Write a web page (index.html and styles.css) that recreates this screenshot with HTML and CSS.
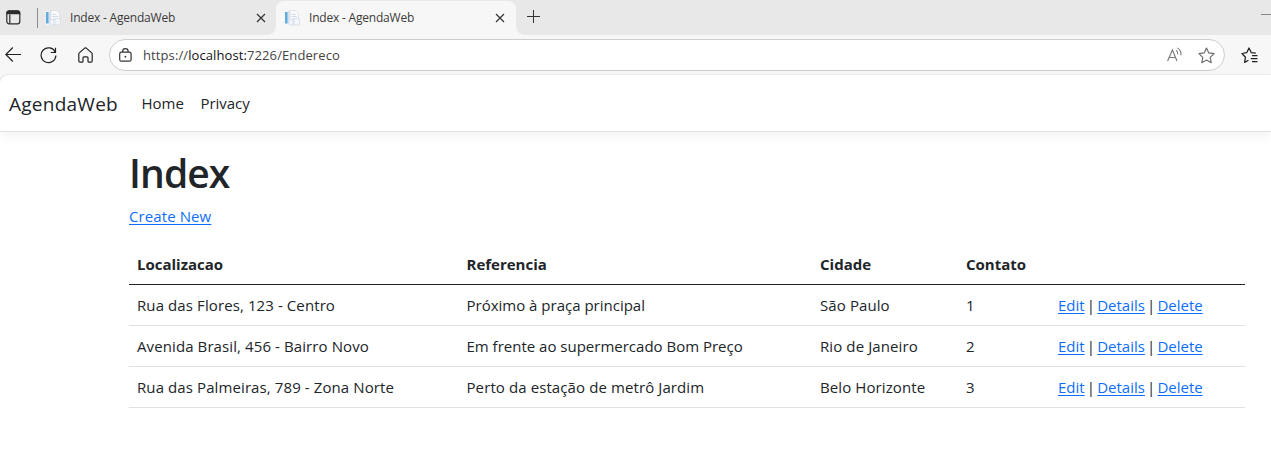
FILE: index.html
```html
<!DOCTYPE html>
<html lang="pt-BR">
<head>
<meta charset="utf-8">
<title>Index - AgendaWeb</title>
<link rel="stylesheet" href="styles.css">
</head>
<body>
<svg class="defs" width="0" height="0">
  <symbol id="favicon" viewBox="0 0 16 16">
    <path d="M.6 1h4v14h-4z" fill="#f6f8fb"/>
    <path d="M1 2h2.600v11.500H1z" fill="#62a9dc"/>
    <path d="M4 .8h6.500v13.200H4z" fill="#dde2ea"/>
    <path d="M6 .6h6l2.500 2.600V10H6z" fill="#f8fafc" stroke="#d3d9e3" stroke-width=".6"/>
    <path d="M7.500 4.500h4M7.500 6.500h5.500" stroke="#c8d0dd" stroke-width=".8"/>
    <path d="M5 9.500h5v5.500H5zM9 8.500h6.500v6.500H9z" fill="#f2f5fa" stroke="#cfd6e2" stroke-width=".6"/>
  </symbol>
  <symbol id="close" viewBox="0 0 10 10"><path d="M1 1l8 8M9 1L1 9" stroke="#333" stroke-width="1.200"/></symbol>
</svg>
<header class="browser">
  <div class="tabstrip">
    <svg class="workspace" width="15" height="15" viewBox="0 0 15 15" fill="none" stroke="#2b2b2b" stroke-width="1.200"><rect x=".8" y=".8" width="13" height="13" rx="2.300"/><path d="M1 2.900Q1 1 3 1h8.600q2 0 2 1.900V3.700H1z" fill="#2b2b2b"/><path d="M3.800 4.500v9"/></svg>
    <span class="divider"></span>
    <div class="tab"><svg class="fav"><use href="#favicon"/></svg><span class="tab-title">Index - AgendaWeb</span><svg class="close"><use href="#close"/></svg></div>
    <div class="tab active"><svg class="fav"><use href="#favicon"/></svg><span class="tab-title">Index - AgendaWeb</span><svg class="close"><use href="#close"/></svg></div>
    <svg class="plus" width="14" height="14" viewBox="0 0 14 14"><path d="M6.500 0v13M0 6.500h13" stroke="#333" stroke-width="1"/></svg>
    <span class="minimize"></span>
  </div>
  <div class="toolbar">
    <svg class="back" width="17" height="16" viewBox="0 0 17 16" fill="none" stroke="#222" stroke-width="1.200"><path d="M16 7.500H.8M7.800.5l-7 7 7 7"/></svg>
    <svg class="reload" width="17" height="17" viewBox="0 0 17 17" fill="none" stroke="#222" stroke-width="1.200"><path d="M15.300 5.300A7.400 7.400 0 1 0 15.900 8.500M15.500 .8v4.700h-4.700"/></svg>
    <svg class="home" width="15" height="16" viewBox="0 0 15 16" fill="none" stroke="#222" stroke-width="1.200" stroke-linejoin="round"><path d="M.8 7Q.8 6.300 1.300 5.900L6.700 1.100q.8-.6 1.600 0l5.400 4.800q.5.400.5 1.100v7q0 1.200-1.200 1.200h-2q-1 0-1-1V10.800q0-.9-.9-.9H5.900q-.9 0-.9.900v3.400q0 1-1 1H2Q.8 15.200.8 14z"/></svg>
    <div class="address">
      <svg class="lock" width="13" height="14" viewBox="0 0 13 14" fill="none" stroke="#333" stroke-width="1.200"><rect x=".7" y="4.200" width="11.400" height="9" rx="1.800"/><path d="M3.700 4V3.300a2.700 2.700 0 0 1 5.400 0V4"/><circle cx="6.400" cy="8.700" r=".9" fill="#333" stroke="none"/></svg>
      <span class="url"><span class="scheme">https://</span><span class="host">localhost:</span><span class="scheme">7226/Endereco</span></span>
      <svg class="read" width="16" height="16" viewBox="0 0 16 16" fill="none" stroke="#777" stroke-width="1.100"><path d="M.6 14L5.400 3l4.600 11M2.200 10.500h6.400"/><path d="M9 3.200q1.900 1.600 1.800 4M10.400.9q3.900 2.400 3.600 7.300" /></svg>
      <svg class="star" width="17" height="17" viewBox="0 0 17 17" fill="none" stroke="#6d6d6d" stroke-width="1.150" stroke-linejoin="round"><path d="M8.500 1l2.300 4.900 5.300.7-3.900 3.700 1 5.400-4.700-2.600-4.700 2.600 1-5.400L.9 6.600l5.300-.7z"/></svg>
    </div>
    <svg class="favorites" width="17" height="17" viewBox="0 0 17 17" fill="none" stroke="#222" stroke-width="1.250" stroke-linejoin="round"><path d="M14.800 6.200l-4.500-.5L8 1 5.700 5.700.9 6.500l3.600 3.700-.9 5.200 3.900-2.200"/><path d="M11 8.500h5.500M9.700 11.500h6.800M11 14.500h5.500"/></svg>
  </div>
</header>
<div class="page">
  <nav class="navbar">
    <a class="brand">AgendaWeb</a>
    <a class="nav-home">Home</a>
    <a class="nav-privacy">Privacy</a>
  </nav>
  <main class="container">
    <h1>Index</h1>
    <p><a class="link create">Create New</a></p>
    <table class="table">
      <colgroup><col class="c1"><col class="c2"><col class="c3"><col class="c4"><col class="c5"></colgroup>
      <thead><tr><th>Localizacao</th><th>Referencia</th><th>Cidade</th><th>Contato</th><th></th></tr></thead>
      <tbody>
        <tr><td class="place">Rua das Flores, 123 - Centro</td><td>Próximo à praça principal</td><td class="city">São Paulo</td><td>1</td><td class="actions"><a class="link">Edit</a> | <a class="link">Details</a> | <a class="link">Delete</a></td></tr>
        <tr><td class="place">Avenida Brasil, 456 - Bairro Novo</td><td>Em frente ao supermercado Bom Preço</td><td class="city">Rio de Janeiro</td><td>2</td><td class="actions"><a class="link">Edit</a> | <a class="link">Details</a> | <a class="link">Delete</a></td></tr>
        <tr><td class="place">Rua das Palmeiras, 789 - Zona Norte</td><td class="city">Perto da estação de metrô Jardim</td><td class="city">Belo Horizonte</td><td>3</td><td class="actions"><a class="link">Edit</a> | <a class="link">Details</a> | <a class="link">Delete</a></td></tr>
      </tbody>
    </table>
  </main>
</div>
</body>
</html>
```
FILE: styles.css
```css
* { box-sizing: border-box; }
body { margin: 0; height: 475px; overflow: hidden; background: #f7f7f7; color: #212529; font: 15px/24px "Open Sans", "Noto Sans", sans-serif; }
svg { display: block; flex: none; }
.defs { position: absolute; }
.tabstrip { display: flex; align-items: center; height: 35px; background: #e8e8e8; }
.workspace { margin: 0 0 1px 6px; }
.divider { width: 1px; height: 20px; margin: 1px 0 0 16px; background: #8a8a8a; }
.tab { display: flex; align-items: center; width: 238px; height: 35px; padding: 0 10px 0 7px; font-size: 12px; color: #3b3b3b; }
.tab.active { position: relative; width: 240px; height: 34px; margin-top: 1px; padding: 0 11px 1px 8px; background: #f7f7f7; border-radius: 8px 8px 0 0; }
.tab.active::before, .tab.active::after { content: ""; position: absolute; bottom: 0; width: 8px; height: 8px; }
.tab.active::before { left: -8px; background: radial-gradient(circle at 0 0, transparent 7.5px, #f7f7f7 8px); }
.tab.active::after { right: -8px; background: radial-gradient(circle at 100% 0, transparent 7.5px, #f7f7f7 8px); }
.fav { width: 16px; height: 16px; margin-right: 9px; }
.tab-title { flex: 1; white-space: nowrap; letter-spacing: -.2px; }
.close { width: 10px; height: 10px; }
.plus { margin: 0 0 1px 11px; }
.minimize { width: 10px; height: 1px; margin: 0 0 6px auto; background: #888; }
.toolbar { display: flex; align-items: center; height: 40px; }
.back { margin-left: 5px; }
.reload { margin-left: 18px; }
.home { margin-left: 21px; }
.address { display: flex; align-items: center; width: 1116px; height: 32px; margin-left: 16px; padding: 0 9px 0 9px; background: #fff; border: 1px solid #cdcdcd; border-radius: 16px; }
.url { flex: 1; margin-left: 11px; font-size: 13px; letter-spacing: .1px; }
.scheme { color: #444; }
.host { color: #111; }
.star { margin-left: 15px; }
.favorites { margin-left: 16px; }
.page { height: 400px; background: #fff; border-radius: 8px 0 0; box-shadow: 0 0 2px rgba(0,0,0,.2); overflow: hidden; }
.navbar { display: flex; align-items: center; height: 57px; padding-left: 9px; border-bottom: 1px solid #dee2e6; box-shadow: 0 4px 12px rgba(0,0,0,.05); }
.brand { width: 132.5px; padding-top: 1px; font-size: 19px; letter-spacing: .25px; }
.nav-home { width: 59px; }
.nav-privacy { letter-spacing: -.05px; }
.container { width: 1116px; margin: 16px 0 0 129px; }
h1 { margin: 0 0 8px; padding-top: 1px; font-size: 39px; line-height: 47px; font-weight: 600; letter-spacing: -.9px; }
p { margin: 0 0 16px; }
.link { color: #0d6efd; text-decoration: underline; text-underline-offset: 2px; text-decoration-thickness: 1px; }
.create, .place, .city { letter-spacing: .1px; }
.actions { word-spacing: -1.75px; }
.table { width: 1116px; table-layout: fixed; border-collapse: separate; border-spacing: 0; }
.c1 { width: 329.5px; } .c2 { width: 353.5px; } .c3 { width: 146px; } .c4 { width: 92px; } .c5 { width: 195px; }
th, td { height: 41px; padding: 8px; text-align: left; white-space: nowrap; border-bottom: 1px solid #dee2e6; }
th { font-weight: 700; border-bottom-color: #212529; }
```
